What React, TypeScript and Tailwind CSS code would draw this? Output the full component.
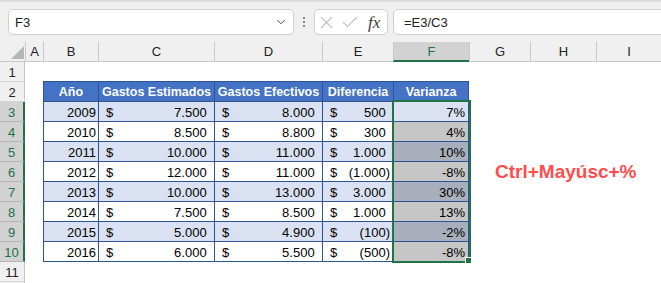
import React from "react";
import { ChevronDown } from "lucide-react";

const W = [
  "w-[25px]",
  "w-[18px]",
  "w-[55px]",
  "w-[116px]",
  "w-[108px]",
  "w-[71px]",
  "w-[76px]",
  "w-[61px]",
  "w-[66px]",
  "w-[65px]",
];
const LETTERS = ["A", "B", "C", "D", "E", "F", "G", "H", "I"];

type DataRow = { y: string; c: string; d: string; e: string; neg: boolean; f: string };
const DATA: DataRow[] = [
  { y: "2009", c: "7.500", d: "8.000", e: "500", neg: false, f: "7%" },
  { y: "2010", c: "8.500", d: "8.800", e: "300", neg: false, f: "4%" },
  { y: "2011", c: "10.000", d: "11.000", e: "1.000", neg: false, f: "10%" },
  { y: "2012", c: "12.000", d: "11.000", e: "1.000", neg: true, f: "-8%" },
  { y: "2013", c: "10.000", d: "13.000", e: "3.000", neg: false, f: "30%" },
  { y: "2014", c: "7.500", d: "8.500", e: "1.000", neg: false, f: "13%" },
  { y: "2015", c: "5.000", d: "4.900", e: "100", neg: true, f: "-2%" },
  { y: "2016", c: "6.000", d: "5.500", e: "500", neg: true, f: "-8%" },
];

function Money({ v, neg }: { v: string; neg: boolean }) {
  return (
    <div className="flex w-full justify-between pl-[7px] pr-[3px]">
      <span>$</span>
      <span>
        {neg ? "(" : ""}
        {v}
        <span className={neg ? "" : "invisible"}>)</span>
      </span>
    </div>
  );
}

function RowHeader({ n, selected }: { n: number; selected: boolean }) {
  return (
    <div
      className={`w-[25px] shrink-0 flex items-center justify-center pt-[1px] border-b ${
        selected
          ? "bg-[#d2d2d2] text-[#217346] border-b-[#b4b4b4] border-r-2 border-r-[#217346]"
          : "bg-[#f0f0f0] text-[#222] border-b-[#d4d4d4] border-r border-r-[#c8c8c8]"
      }`}
    >
      {n}
    </div>
  );
}

function SheetRow({ r }: { r: number }) {
  const selected = r >= 3 && r <= 10;
  const cells: React.ReactNode[] = [];
  for (let ci = 1; ci <= 9; ci++) {
    const w = W[ci];
    const inTable = ci >= 2 && ci <= 6;
    let cls = `${w} shrink-0 h-full`;
    let content: React.ReactNode = null;
    if (inTable && r === 1) {
      cls += " border-b border-[#2f5496]";
    } else if (inTable && r === 2) {
      cls +=
        " bg-[#4472c4] text-white font-bold text-[12.5px] flex items-center justify-center pt-[1px] border-l border-b border-[#2f5496]";
      if (ci === 6) cls += " border-r";
      content = ["Año", "Gastos Estimados", "Gastos Efectivos", "Diferencia", "Varianza"][ci - 2];
    } else if (inTable && r >= 3 && r <= 10) {
      const i = r - 3;
      const d = DATA[i];
      const band = i % 2 === 0 ? "bg-[#d9e1f2]" : "bg-white";
      cls += " flex items-center pt-[1px] border-l border-b border-[#2f5496] text-black";
      if (ci === 2) {
        cls += ` ${band} justify-end pr-[2px]`;
        content = d.y;
      } else if (ci === 3) {
        cls += ` ${band}`;
        content = <Money v={d.c} neg={false} />;
      } else if (ci === 4) {
        cls += ` ${band}`;
        content = <Money v={d.d} neg={false} />;
      } else if (ci === 5) {
        cls += ` ${band}`;
        content = <Money v={d.e} neg={d.neg} />;
      } else {
        const fb = r === 3 ? "bg-[#d9e1f2]" : i % 2 === 1 ? "bg-[#c6c6c6]" : "bg-[#a8aebb]";
        cls += ` ${fb} justify-end pr-[3px] border-r`;
        content = d.f;
      }
    } else {
      cls += " bg-white";
    }
    cells.push(
      <div key={ci} className={cls}>
        {content}
      </div>
    );
  }
  return (
    <div className="flex h-[20px]">
      <RowHeader n={r} selected={selected} />
      {cells}
    </div>
  );
}

export default function App() {
  const rows = Array.from({ length: 11 }, (_, i) => i + 1);
  return (
    <div className="relative w-[661px] h-[283px] overflow-hidden bg-white font-['Liberation_Sans',Arial,sans-serif] text-[13px] leading-none">
      {/* formula bar */}
      <div className="h-[42px] border-t-2 border-[#dadada] bg-[#f0f0f0] flex items-start pt-[7px] text-[13px] text-[#222]">
        <div className="ml-[8px] w-[286px] h-[26px] shrink-0 bg-white border border-[#d0d0d0] rounded-[5px] flex items-center justify-between pl-[6px] pr-[5px]">
          <span>F3</span>
          <ChevronDown size={14} strokeWidth={1.6} color="#444" />
        </div>
        <div className="w-[20px] h-[26px] shrink-0 flex flex-col items-center justify-center gap-[2px]">
          <span className="block w-[2px] h-[2px] bg-[#8a8a8a]" />
          <span className="block w-[2px] h-[2px] bg-[#8a8a8a]" />
          <span className="block w-[2px] h-[2px] bg-[#8a8a8a]" />
        </div>
        <div className="w-[74px] h-[26px] shrink-0 bg-white border border-[#d0d0d0] rounded-[5px] flex items-center pl-[5px]">
          <svg width="13" height="13" viewBox="0 0 13 13">
            <path d="M1 1L12 12M12 1L1 12" stroke="#c2c2c2" strokeWidth="1.2" fill="none" />
          </svg>
          <svg className="ml-[9px]" width="16" height="12" viewBox="0 0 16 12">
            <path d="M1 6L5.5 10.5L15 1" stroke="#c2c2c2" strokeWidth="1.2" fill="none" />
          </svg>
          <span className="ml-[10px] font-['Liberation_Serif',serif] italic text-[17px] text-[#3c3c3c]">fx</span>
        </div>
        <div className="ml-[5px] mr-[-8px] flex-1 h-[26px] bg-white border border-[#d0d0d0] rounded-[5px] flex items-center pl-[10px]">
          =E3/C3
        </div>
      </div>

      {/* column headers */}
      <div className="flex h-[20px] bg-[#f0f0f0] text-[13px]">
        <div className="w-[25px] shrink-0 flex items-end justify-end pr-[1px] pb-[2px] border-b border-[#c8c8c8]">
          <svg width="13" height="13" viewBox="0 0 13 13">
            <polygon points="13,0 13,13 0,13" fill="#b6b6b6" />
          </svg>
        </div>
        {LETTERS.map((l, i) => (
          <div
            key={l}
            className={`${W[i + 1]} shrink-0 flex items-center justify-center border-l border-l-[#c8c8c8] ${
              l === "F"
                ? "bg-[#d2d2d2] text-[#217346] border-b-2 border-b-[#217346]"
                : "border-b border-b-[#c8c8c8] text-[#222]"
            }`}
          >
            {l}
          </div>
        ))}
      </div>

      {/* rows */}
      <div className="flex flex-col">
        {rows.map((r) => (
          <SheetRow key={r} r={r} />
        ))}
        <div className="h-[1px] w-[25px] bg-[#f0f0f0] border-r border-[#c8c8c8]" />
      </div>

      {/* selection */}
      <div className="absolute left-[392px] top-[100px] w-[79px] h-[163px] border-2 border-[#217346]" />
      <div className="absolute left-[465px] top-[257px] w-[7px] h-[7px] bg-[#217346] border border-white" />

      {/* floating label */}
      <div className="absolute left-[495px] top-[162px] text-[19px] font-bold text-[#ff4d4d] leading-[19px] whitespace-nowrap font-['Liberation_Sans',Arial,sans-serif]">
        Ctrl+Mayúsc+%
      </div>
    </div>
  );
}
